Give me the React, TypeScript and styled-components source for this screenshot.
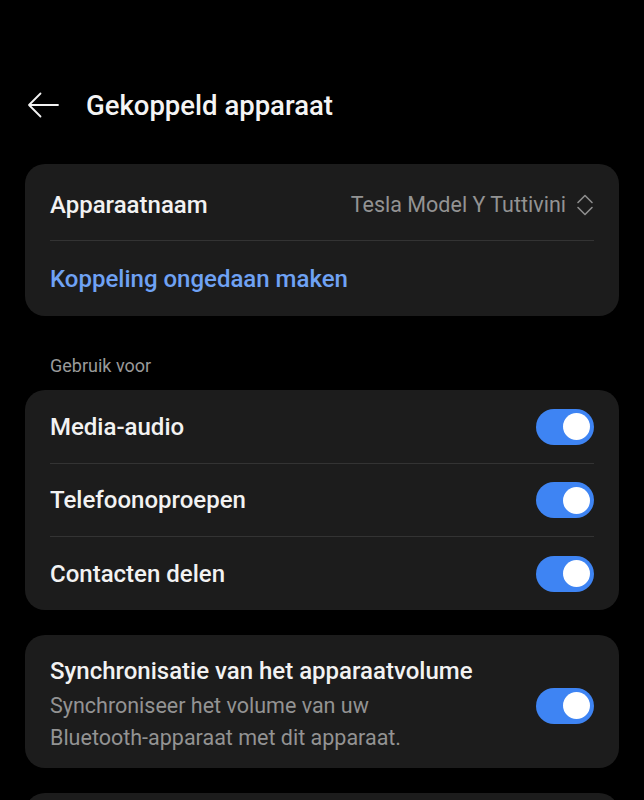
import styled, { createGlobalStyle } from 'styled-components'

const GlobalStyle = createGlobalStyle`
  html, body {
    margin: 0;
    padding: 0;
    background: #000;
  }
  body {
    font-family: Roboto, "Noto Sans", sans-serif;
    color: #f2f2f2;
  }
`

const BackArrow = () => (
  <svg width="32" height="26" viewBox="0 0 32 26" fill="none">
    <path d="M31 13H2M13.5 1.5L2 13l11.5 11.5" stroke="#f2f2f2" strokeWidth="1.8" strokeLinecap="round" strokeLinejoin="round" />
  </svg>
)

const UpDown = () => (
  <svg width="18" height="24" viewBox="0 0 18 24" fill="none">
    <path d="M2 9.5L9 2.5l7 7M2 14.5l7 7 7-7" stroke="#8d8d8d" strokeWidth="1.6" strokeLinecap="round" strokeLinejoin="round" />
  </svg>
)

const Toggle = ({ on = true }: { on?: boolean }) => (
  <Track $on={on}>
    <Thumb />
  </Track>
)

export default function App() {
  return (
    <>
      <GlobalStyle />
      <Screen>
        <Header>
          <BackButton>
            <BackArrow />
          </BackButton>
          <Title>Gekoppeld apparaat</Title>
        </Header>

        <Card>
          <Row $h={76} $top={5}>
            <Label>Apparaatnaam</Label>
            <Value>
              Tesla Model Y Tuttivini
              <UpDown />
            </Value>
          </Row>
          <Row $h={76}>
            <Link>Koppeling ongedaan maken</Link>
          </Row>
        </Card>

        <SectionLabel>Gebruik voor</SectionLabel>

        <Card>
          <Row $h={73}>
            <Label>Media-audio</Label>
            <Toggle />
          </Row>
          <Row $h={73}>
            <Label>Telefoonoproepen</Label>
            <Toggle />
          </Row>
          <Row $h={74}>
            <Label>Contacten delen</Label>
            <Toggle />
          </Row>
        </Card>

        <Card $gap={25}>
          <TextRow>
            <TextBlock>
              <Label>Synchronisatie van het apparaatvolume</Label>
              <Sub>
                Synchroniseer het volume van uw
                <br />
                Bluetooth-apparaat met dit apparaat.
              </Sub>
            </TextBlock>
            <Toggle />
          </TextRow>
        </Card>

        <Card $gap={25}>
          <Row $h={76} />
        </Card>
      </Screen>
    </>
  )
}

const Screen = styled.div`
  width: 644px;
  height: 800px;
  overflow: hidden;
  padding: 0 25px;
  box-sizing: border-box;
  display: flex;
  flex-direction: column;
  & > * {
    flex-shrink: 0;
  }
`

const Header = styled.div`
  display: flex;
  align-items: center;
  gap: 27px;
  height: 50px;
  margin-top: 80px;
  margin-bottom: 34px;
`

const BackButton = styled.div`
  display: flex;
  align-items: center;
  padding-left: 2px;
`

const Title = styled.h1`
  margin: 0;
  font-size: 27.5px;
  font-weight: 500;
  color: #f4f4f4;
`

const Card = styled.div<{ $gap?: number }>`
  background: #1c1c1c;
  border-radius: 20px;
  padding: 0 25px;
  margin-top: ${p => p.$gap ?? 0}px;
`

const Row = styled.div<{ $h: number; $top?: number }>`
  height: ${p => p.$h}px;
  padding-top: ${p => p.$top ?? 0}px;
  box-sizing: border-box;
  display: flex;
  align-items: center;
  justify-content: space-between;
  & + & {
    border-top: 1px solid #333;
  }
`

const Label = styled.div`
  font-size: 24px;
  line-height: 28px;
  font-weight: 500;
  color: #f2f2f2;
`

const Value = styled.div`
  display: flex;
  align-items: center;
  gap: 10px;
  font-size: 21.5px;
  color: #939393;
`

const Link = styled.div`
  font-size: 24px;
  font-weight: 500;
  color: #6fa2f4;
`

const SectionLabel = styled.div`
  font-size: 18px;
  color: #9a9a9a;
  padding: 39px 25px 14px;
`

const TextRow = styled.div`
  display: flex;
  align-items: center;
  justify-content: space-between;
  padding: 22px 0 14px;
`

const TextBlock = styled.div`
  display: flex;
  flex-direction: column;
  gap: 5px;
`

const Sub = styled.div`
  font-size: 21.5px;
  line-height: 32px;
  color: #939393;
`

const Track = styled.div<{ $on: boolean }>`
  width: 58px;
  height: 36px;
  border-radius: 18px;
  background: ${p => (p.$on ? '#3e84f3' : '#555')};
  display: flex;
  align-items: center;
  justify-content: ${p => (p.$on ? 'flex-end' : 'flex-start')};
  padding: 0 4px;
  box-sizing: border-box;
  flex-shrink: 0;
`

const Thumb = styled.div`
  width: 27px;
  height: 27px;
  border-radius: 50%;
  background: #fff;
`
